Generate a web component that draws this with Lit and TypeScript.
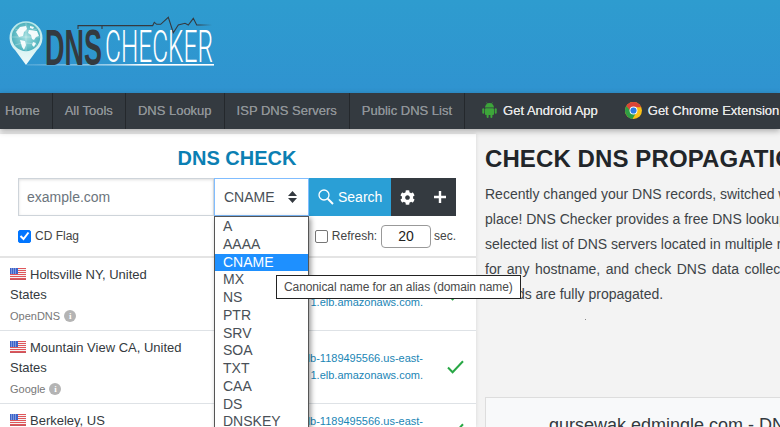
import { LitElement, html, css, svg } from "lit";
import { customElement } from "lit/decorators.js";

const TYPES = ["A","AAAA","CNAME","MX","NS","PTR","SRV","SOA","TXT","CAA","DS","DNSKEY"];
const ROWS = [
  { name: "Holtsville NY, United States", provider: "OpenDNS" },
  { name: "Mountain View CA, United States", provider: "Google" },
  { name: "Berkeley, US", provider: "Quad9" },
];

const flag = html`<svg class="flag" width="16" height="12" viewBox="0 0 16 12">
  <rect width="16" height="12" fill="#f4f4f4"/>
  <path d="M0 .5h16M0 2.500h16M0 4.500h16M0 6.500h16M0 8.500h16M0 10.500h16" stroke="#e0565b" stroke-width="1"/>
  <rect y="11" width="16" height="1" fill="#c9555c"/>
  <rect width="8" height="6" fill="#3c63c8"/>
  <path d="M1 1h6M1 3h6M1 5h6" stroke="#dfe6fa" stroke-width=".8" stroke-dasharray="1 1"/>
</svg>`;

const check = html`<svg class="tick" width="17" height="14" viewBox="0 0 17 14"><path d="M1 7.500l4.600 4.800L16 1.300" fill="none" stroke="#28a745" stroke-width="2"/></svg>`;

const logo = html`<svg class="logo" width="225" height="70" viewBox="0 0 225 70">
  <defs>
    <linearGradient id="ul" x1="0" x2="1"><stop offset="0" stop-color="#fff" stop-opacity=".15"/><stop offset=".45" stop-color="#fff" stop-opacity=".55"/><stop offset=".62" stop-color="#fff"/></linearGradient>
    <linearGradient id="pl" x1="0" x2="1"><stop offset="0" stop-color="#343a40"/><stop offset=".9" stop-color="#343a40"/><stop offset="1" stop-color="#343a40" stop-opacity="0"/></linearGradient>
    <linearGradient id="pin" x1="0" x2="0" y1="0" y2="1"><stop offset="0" stop-color="#b4e6e8"/><stop offset="1" stop-color="#eefafa"/></linearGradient>
    <radialGradient id="gl"><stop offset="0" stop-color="#a4dfe0"/><stop offset="1" stop-color="#4fb2bd"/></radialGradient>
  </defs>
  <path d="M26 65L15 50A16.500 16.500 0 1 1 37 50Z" fill="url(#pin)"/>
  <circle cx="26" cy="37" r="14.200" fill="url(#gl)"/>
  <path d="M16 32l4-5 6-1 1 3-3 3-1 4-4 1zM29 30l8 1 2 5-3 1-2 3-2-1-1-4-3-2zM20 40l5 1 1 4-2 5-2-3zM33 42l3 1-2 4-2-2zM30 26l4 1-1 2-3-1z" fill="#fff" opacity=".92"/>
  <path d="M26 23v28M12 37h28M15 29q11 4 22 0M15 45q11-4 22 0" fill="none" stroke="#fff" stroke-width=".5" opacity=".55"/>
  <rect x="27" y="64" width="187" height="1.600" fill="url(#ul)"/>
  <path d="M78 29V25.600H152.700L154.300 22.300L156.700 24.300H160.700L168.300 17.300L173.300 32.700L178.300 25L185 23.300L188.300 25L193.300 18.300L196.700 25H212M102 25.600V29" fill="none" stroke="url(#pl)" stroke-width="1.100"/>
  <text class="dns" x="45" y="65" textLength="57" lengthAdjust="spacingAndGlyphs">DNS</text>
  <text class="chk" x="105" y="62" textLength="108" lengthAdjust="spacingAndGlyphs">CHECKER</text>
</svg>`;

const android = html`<svg class="nav-ic" width="15" height="16" viewBox="0 0 15 16" fill="#3da53a">
  <path d="M3 5.600a4.500 4.500 0 0 1 9 0z"/><rect x="3" y="6.300" width="9" height="6.700" rx="1"/>
  <rect x=".3" y="6.200" width="2" height="5.600" rx="1"/><rect x="12.700" y="6.200" width="2" height="5.600" rx="1"/>
  <rect x="4.600" y="12" width="2" height="4" rx="1"/><rect x="8.400" y="12" width="2" height="4" rx="1"/>
  <path d="M4.500 .4l1.300 2M10.500 .4L9.200 2.400" stroke="#3da53a" stroke-width=".6"/>
</svg>`;

const chrome = html`<svg class="nav-ic" width="17" height="17" viewBox="0 0 32 32">
  <circle cx="16" cy="16" r="16" fill="#fbc116"/>
  <path d="M16 0A16 16 0 0 0 2.500 7.400L9 18.500 16 10H30.500A16 16 0 0 0 16 0Z" fill="#db4437"/>
  <path d="M2.500 7.400A16 16 0 0 0 14 31.900L21 20 12 19 2.500 7.400Z" fill="#2f9e44"/>
  <circle cx="16" cy="16" r="7.400" fill="#fff"/><circle cx="16" cy="16" r="5.800" fill="#2b7be4"/>
</svg>`;

const gear = svg`<path d="M487.4 315.7l-42.6-24.6c4.3-23.2 4.3-47 0-70.2l42.6-24.6c4.9-2.8 7.1-8.6 5.5-14-11.1-35.6-30-67.8-54.7-94.6-3.8-4.1-10-5.1-14.8-2.3L380.8 110c-17.9-15.4-38.5-27.3-60.8-35.1V25.8c0-5.6-3.9-10.500-9.400-11.700-36.700-8.200-74.300-7.800-109.200 0-5.500 1.200-9.400 6.100-9.400 11.700V75c-22.200 7.900-42.800 19.800-60.800 35.100L88.700 85.500c-4.900-2.800-11-1.900-14.800 2.300-24.700 26.700-43.600 58.900-54.700 94.600-1.700 5.400.6 11.200 5.500 14L67.300 221c-4.300 23.200-4.300 47 0 70.200l-42.600 24.600c-4.900 2.800-7.100 8.600-5.500 14 11.100 35.600 30 67.800 54.700 94.600 3.800 4.100 10 5.100 14.800 2.300l42.600-24.600c17.900 15.400 38.500 27.300 60.800 35.100v49.200c0 5.600 3.900 10.500 9.400 11.700 36.700 8.200 74.300 7.800 109.200 0 5.500-1.200 9.400-6.100 9.400-11.700v-49.200c22.200-7.900 42.800-19.800 60.800-35.100l42.600 24.600c4.900 2.800 11 1.900 14.800-2.300 24.700-26.700 43.600-58.900 54.700-94.600 1.500-5.500-.7-11.300-5.600-14.100zM256 336c-44.100 0-80-35.900-80-80s35.900-80 80-80 80 35.900 80 80-35.900 80-80 80z"/>`;

@customElement("app-root")
export class AppRoot extends LitElement {
  static styles = css`
    :host { display: block; width: 780px; height: 427px; overflow: hidden; position: relative;
      background: #f3f3f3; font-family: "Liberation Sans", Arial, sans-serif; color: #343a40; }
    * { box-sizing: border-box; }
    .top { height: 93px; background: linear-gradient(180deg, #2e9ccf, #2f93d0); }
    .logo { display: block; }
    .logo-wrap { height: 70px; }
    .dns { font: 700 50px "Liberation Sans", sans-serif; fill: #343a40; }
    .chk { font: 300 45px Roboto, sans-serif; fill: #fff; }
    nav { height: 36px; background: #343a40; display: flex; align-items: stretch; white-space: nowrap;
      box-shadow: 0 2px 6px rgba(0,0,0,.3); position: relative; z-index: 2; font-size: 13px; }
    nav a { color: #8f9498; text-shadow: 0 0 .6px #8f9498; display: flex; align-items: center; padding: 0 12px 1px; border-right: 1px solid #24282c; }
    nav a:first-child { padding: 0 12px 1px 5px; }
    nav a.app { border: 0; color: #e6e6e6; text-shadow: 0 0 .5px #e6e6e6; gap: 6px; padding: 0 0 0 17px; margin-right: 10px; position: relative; top: -1px; }
    main { display: flex; height: 298px; padding-top: 5px; }
    .left { width: 476px; flex: none; background: #fff; box-shadow: 0 0 4px rgba(0,0,0,.12); }
    .title { margin: 0 2px 8px 0; padding-top: 12px; height: 36px; line-height: 24px; text-align: center; font-size: 20px; font-weight: 700; color: #0b7fb3; }
    form { display: flex; height: 38px; margin: 0 20px 0 18px; }
    .inp { width: 196px; border: 1px solid #ced4da; box-shadow: inset 0 1px 3px rgba(0,0,0,.13); color: #6c757d; font-size: 14px; display: flex; align-items: center; padding-left: 8px; background: #fff; }
    .sel { width: 95px; border: 1px solid #80bdff; color: #495057; font-size: 14px; display: flex; align-items: center; justify-content: space-between; padding: 0 11px 0 9px; background: #fff; }
    .btn { background: #2a9fd6; color: #fff; font-size: 14px; display: flex; align-items: center; gap: 4px; width: 82px; padding-left: 9px; }
    .tools { background: #343a40; width: 65px; display: flex; align-items: center; color: #fff; padding-left: 9px; gap: 19px; }
    .opts { height: 42px; display: flex; align-items: center; font-size: 12px; color: #444; padding: 0 20px 0 18px; border-bottom: 2px solid #e4e4e4; }
    .box { width: 13px; height: 13px; border-radius: 2px; border: 1px solid #767676; background: #fff; flex: none; display: flex; align-items: center; justify-content: center; }
    .box.on { background: #0075ff; border-color: #0075ff; }
    .cd { margin-left: 4px; width: 281px; }
    .ref { margin-left: 4px; }
    .num { width: 50px; height: 23px; border: 1px solid #999; border-radius: 4px; margin: 0 3px 0 4px; display: flex; align-items: center; justify-content: center; font-size: 14px; color: #222; }
    .row { border-bottom: 1px solid #dee2e6; display: flex; align-items: center; padding-left: 10px; }
    .name { width: 172.500px; flex: none; padding: 7px 0 4px; font-size: 13px; line-height: 20px; color: #343a40; }
    .flag { vertical-align: -1px; margin-right: 4px; }
    .prov { font-size: 11px; color: #777; line-height: 20px; margin-top: 1px; display: flex; align-items: center; gap: 4px; }
    .i { width: 12px; height: 12px; border-radius: 50%; background: #b4b4b4; color: #fff; font: 700 9px/12px "Liberation Serif", serif; text-align: center; }
    .val { flex: 1; text-align: right; font-size: 11px; line-height: 17px; color: #1a85b5; white-space: nowrap; }
    .chkc { width: 53px; flex: none; padding-left: 24px; display: flex; }
    .right { flex: 1; min-width: 0; padding: 10px 0 0 9px; overflow: hidden; white-space: nowrap; }
    h1 { margin: 0 0 9px; font-size: 24px; line-height: 29px; letter-spacing: .1px; color: #212529; }
    .p { font-size: 14px; line-height: 25px; color: #3d4347; height: 125px; }
    .j { word-spacing: 1.600px; }
    .dot { height: 1px; width: 1px; background: #888; margin: 12px 0 0 100px; }
    .card { margin-top: 77px; height: 60px; border: 1px solid #ddd; border-right: 0; background: #f8f9fa; padding: 15px 0 0 63px; font-size: 18px; line-height: 24px; color: #343a40; width: 400px; }
    .drop { position: absolute; left: 214px; top: 216px; width: 95px; height: 230px; border: 1px solid #555; background: #fff; box-shadow: 2px 2px 5px rgba(0,0,0,.4); z-index: 5; font-size: 14px; color: #495057; padding-top: 1px; }
    .drop div { height: 17.750px; line-height: 17.750px; padding-left: 8px; }
    .drop .on { background: #1e90ff; color: #fff; }
    .tip { position: absolute; left: 276px; top: 275px; width: 245px; height: 24px; border: 1px solid #222; background: #fff; z-index: 6; font-size: 12px; letter-spacing: -.1px; line-height: 23px; padding-left: 7px; color: #4a4a4a; white-space: nowrap; }
  `;

  render() {
    return html`
      <div class="top"><div class="logo-wrap">${logo}</div></div>
      <nav>
        <a>Home</a><a>All Tools</a><a>DNS Lookup</a><a>ISP DNS Servers</a><a>Public DNS List</a>
        <a class="app">${android}Get Android App</a>
        <a class="app">${chrome}Get Chrome Extension</a>
      </nav>
      <main>
        <section class="left">
          <h2 class="title">DNS CHECK</h2>
          <form>
            <div class="inp">example.com</div>
            <div class="sel">CNAME
              <svg width="9" height="12" viewBox="0 0 9 12" fill="#343a40"><path d="M4.500 0L9 5H0zM4.500 12L0 7H9z"/></svg>
            </div>
            <div class="btn">
              <svg width="16" height="16" viewBox="0 0 16 16" fill="none" stroke="#fff"><circle cx="6" cy="6" r="5" stroke-width="1.300"/><path d="M9.800 9.800L15 15" stroke-width="2"/></svg>
              Search
            </div>
            <div class="tools">
              <svg width="15" height="15" viewBox="0 0 512 512" fill="#fff">${gear}</svg>
              <svg width="12" height="12" viewBox="0 0 12 12" fill="#fff"><path d="M4.800 0h2.400v4.800H12v2.400H7.200V12H4.800V7.200H0V4.800h4.800z"/></svg>
            </div>
          </form>
          <div class="opts">
            <span class="box on"><svg width="11" height="10" viewBox="0 0 11 10"><path d="M1.500 5l3 3 5-6.500" fill="none" stroke="#fff" stroke-width="2"/></svg></span>
            <span class="cd">CD Flag</span>
            <span class="box"></span><span class="ref">Refresh:</span>
            <span class="num">20</span><span>sec.</span>
          </div>
          ${ROWS.map(r => html`
            <div class="row">
              <div class="name">${flag}${r.name}
                <div class="prov">${r.provider}<span class="i">i</span></div>
              </div>
              <div class="val">elb-1189495566.us-east-<br>1.elb.amazonaws.com.</div>
              <div class="chkc">${check}</div>
            </div>`)}
        </section>
        <section class="right">
          <h1>CHECK DNS PROPAGATION</h1>
          <div class="p">
            <div>Recently changed your DNS records, switched web hosts, or started a new website?</div>
            <div>place! DNS Checker provides a free DNS lookup service for checking domain name</div>
            <div>selected list of DNS servers located in multiple regions worldwide. Perform a DNS</div>
            <div class="j">for any hostname, and check DNS data collected from all servers to confirm</div>
            <div>records are fully propagated.</div>
          </div>
          <div class="dot"></div>
          <div class="card">gursewak.edmingle.com - DNS Propagation</div>
        </section>
      </main>
      <div class="drop">${TYPES.map(t => html`<div class=${t === "CNAME" ? "on" : ""}>${t}</div>`)}</div>
      <div class="tip">Canonical name for an alias (domain name)</div>
    `;
  }
}
